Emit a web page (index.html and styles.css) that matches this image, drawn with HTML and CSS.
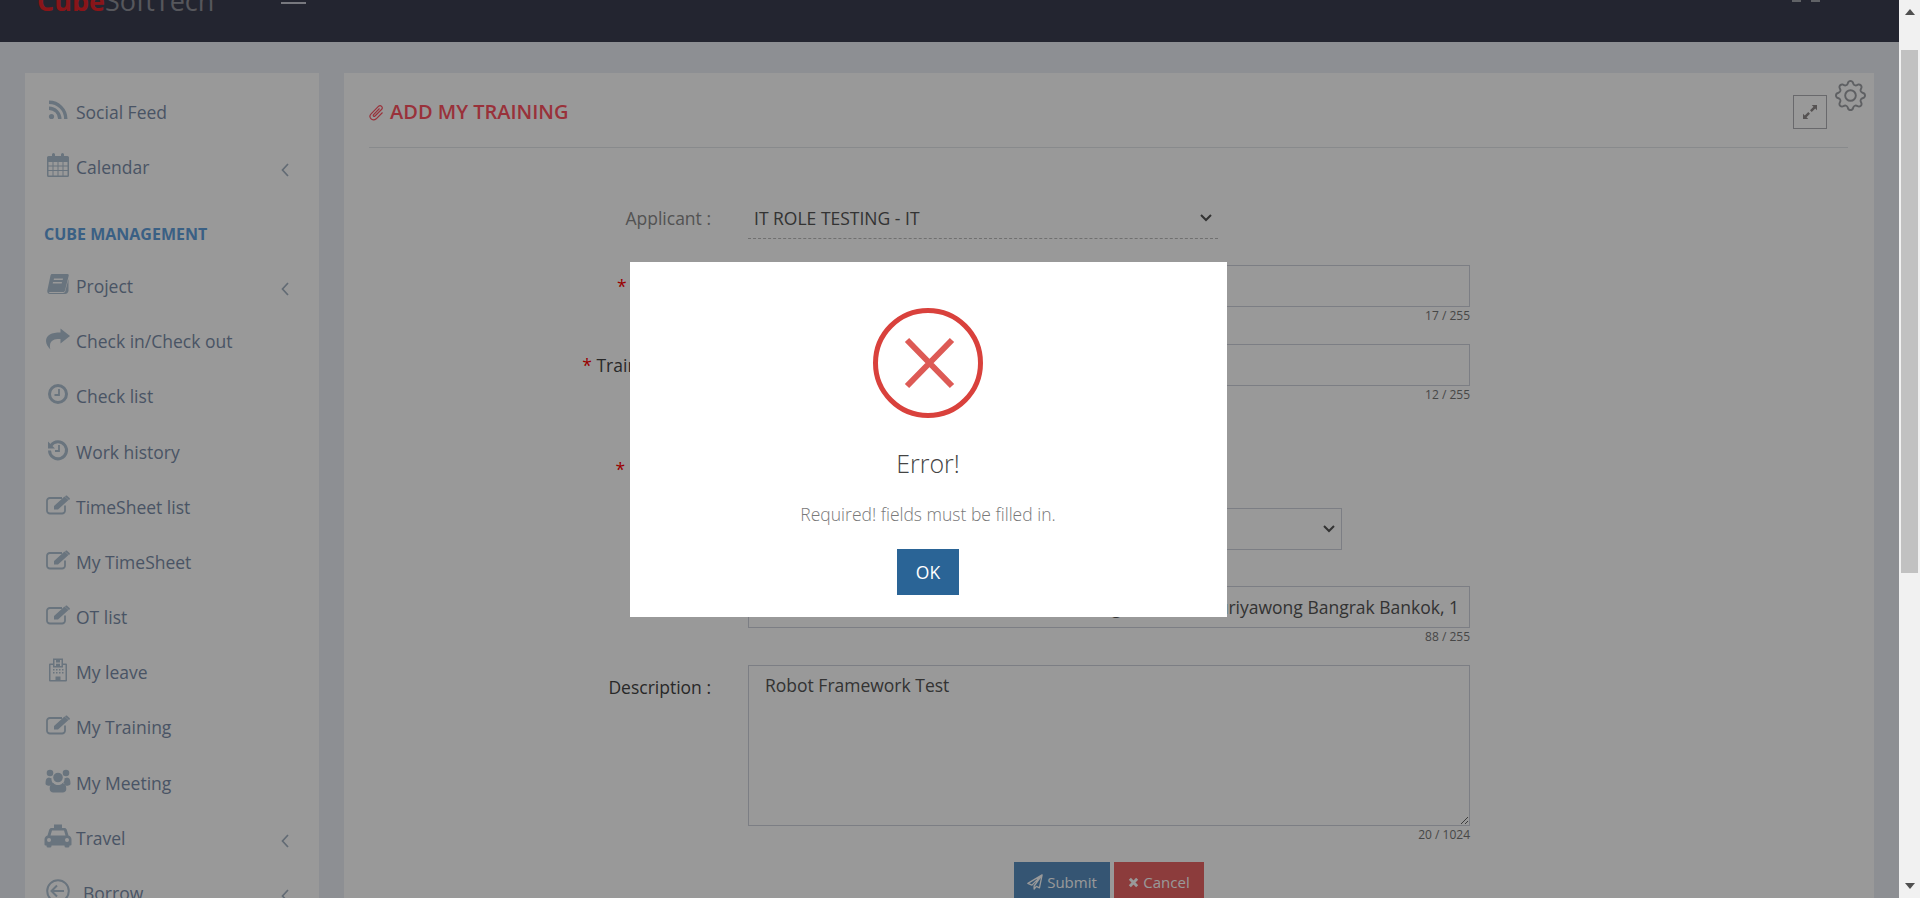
FILE: index.html
```html
<!DOCTYPE html>
<html lang="en">
<head>
<meta charset="utf-8">
<title>Add My Training</title>
<link rel="stylesheet" href="styles.css">
</head>
<body>
<svg class="defs" aria-hidden="true">
  <symbol id="i-rss" viewBox="-2 -2 24 24"><circle cx="3.500" cy="16.500" r="2.600" fill="currentColor"/><path d="M1 8.200A10.800 10.800 0 0 1 11.800 19M1 2.200A16.800 16.800 0 0 1 17.800 19" fill="none" stroke="currentColor" stroke-width="3.400"/></symbol>
  <symbol id="i-cal" viewBox="-1 0 24 24"><path fill="currentColor" fill-rule="evenodd" d="M1.500 3H5V1.500a1.500 1.500 0 0 1 3 0V3h6V1.500a1.500 1.500 0 0 1 3 0V3h3.500A1.500 1.500 0 0 1 22 4.500v18a1.500 1.500 0 0 1-1.500 1.500h-19A1.500 1.500 0 0 1 0 22.500v-18A1.500 1.500 0 0 1 1.500 3zM1.500 9v3.500h4V9zm5 0v3.500h4V9zm5 0v3.500h4V9zm5 0v3.500h4V9zM1.500 13.500V17h4v-3.500zm5 0V17h4v-3.500zm5 0V17h4v-3.500zm5 0V17h4v-3.500zM1.500 18v4.500h4V18zm5 0v4.500h4V18zm5 0v4.500h4V18zm5 0v4.500h4V18z"/></symbol>
  <symbol id="i-book" viewBox="-1 -2 24 24"><path fill="currentColor" fill-rule="evenodd" d="M5 0h15.500c1 0 1.500.8 1.200 1.800L18 16.500c-.3 1-1.200 1.500-2 1.500H3.500c-1 0-1.500.4-1.500 1h14c1 0 1.800-.3 2.200-1.400L21.500 5v12c-.5 1.800-1.800 3-3.500 3H3C1 20 0 18.500.3 16.500L3.500 1.500C3.700.6 4.200 0 5 0zm2 4.500L6.700 6h9l.3-1.500zm-1 3.500-.3 1.500h9l.3-1.500z"/></symbol>
  <symbol id="i-share" viewBox="0 -1.500 24 24"><path fill="currentColor" d="M14.500 0 24 7.500l-9.500 7.500v-4.500c-5-.2-9.800.6-10.500 6-.2 1.500-.1 3 .4 4.500C2 18.500 0 15.500 0 12.500 0 6.500 5.500 4 14.500 4z"/></symbol>
  <symbol id="i-clock" viewBox="-2 -2 24 24"><circle cx="10" cy="10" r="8.500" fill="none" stroke="currentColor" stroke-width="3"/><path d="M11 5v6H6.500" fill="none" stroke="currentColor" stroke-width="1.800"/></symbol>
  <symbol id="i-hist" viewBox="-2 -2 24 24"><path d="M3 5.500A8.500 8.500 0 1 1 1.500 10.500" fill="none" stroke="currentColor" stroke-width="3"/><path fill="currentColor" d="M0 1.500 7 8.500H0z"/><path d="M11 5v6H7" fill="none" stroke="currentColor" stroke-width="1.800"/></symbol>
  <symbol id="i-edit" viewBox="0 -2.500 24 24"><path d="M16 2.500H4A2.800 2.800 0 0 0 1 5.300v10A2.800 2.800 0 0 0 4 18h12a2.800 2.800 0 0 0 3-2.700V10" fill="none" stroke="currentColor" stroke-width="1.800"/><path fill="currentColor" d="M8 10.500 18.500 1l4 3.500L12 14H8zM19.500.4c.6-.5 1.300-.5 1.800 0l2.200 2c.6.500.6 1.200 0 1.700l-.5.400-4-3.500z"/></symbol>
  <symbol id="i-hosp" viewBox="-3 -.5 24 24"><path fill="currentColor" fill-rule="evenodd" d="M4 0h10v5h3a1 1 0 0 1 1 1v16a1 1 0 0 1-1 1H1a1 1 0 0 1-1-1V6a1 1 0 0 1 1-1h3zm1.500 1.500v6h1.500V5.200h4V7.500h1.500v-6H11V4H7V1.500zM1.500 6.500v15h5V18h5v3.500h5v-15H14v2.500H4V6.500zM4 10.500v1.500h1.500v-1.500zm3 0v1.500h1.500v-1.500zm3 0v1.500h1.500v-1.500zm3 0v1.500h1.500v-1.500zM4 13.500V15h1.500v-1.500zm3 0V15h1.500v-1.500zm3 0V15h1.500v-1.500zm3 0V15h1.500v-1.500z"/></symbol>
  <symbol id="i-users" viewBox=".5 -.5 24 24" overflow="visible"><g fill="currentColor"><circle cx="4.500" cy="3.500" r="3.300"/><circle cx="20.500" cy="3.500" r="3.300"/><circle cx="12.500" cy="8" r="4.800"/><path d="M0 14c0-4 1-6 3.500-6 .8.600 1.500.8 2.500.8-.2 2.500.6 3.700 1.500 5.200-1.500.2-2.500 1-3.200 2.200C2 16.200 0 16 0 14zM25 14c0-4-1-6-3.500-6-.8.600-1.500.8-2.500.8.200 2.500-.6 3.700-1.500 5.200 1.500.2 2.500 1 3.200 2.200C23 16.200 25 16 25 14zM8 13.500c1 1.500 2.500 2 4.500 2s3.500-.5 4.500-2c2.500 0 3.800 2.500 3.800 6 0 2.300-1.500 3.500-3.500 3.500H7.700c-2 0-3.500-1.200-3.500-3.500 0-3.500 1.300-6 3.800-6z"/></g></symbol>
  <symbol id="i-taxi" viewBox="1.500 -.5 24 24" overflow="visible"><path fill="currentColor" fill-rule="evenodd" d="M9.500 0h8v3.500H20c1 0 1.800.6 2.200 1.600L24 11c1.800.6 3 2 3 4v5a1 1 0 0 1-1 1h-1v.5a1.500 1.500 0 0 1-1.500 1.500h-2a1.500 1.500 0 0 1-1.500-1.500V21H7v.5A1.500 1.500 0 0 1 5.500 23h-2A1.500 1.500 0 0 1 2 21.500V21H1a1 1 0 0 1-1-1v-5c0-2 1.200-3.400 3-4l1.800-5.900C5.200 4.100 6 3.500 7 3.500h2.500zM7.500 6 6 11h15l-1.500-5zM4.500 13.500a2 2 0 1 0 0 4 2 2 0 0 0 0-4zm18 0a2 2 0 1 0 0 4 2 2 0 0 0 0-4z"/></symbol>
  <symbol id="i-back" viewBox="0 0 24 24"><circle cx="12" cy="12" r="10.800" fill="none" stroke="currentColor" stroke-width="2"/><path d="M11 6.500 5.500 12l5.500 5.500M6 12h12" fill="none" stroke="currentColor" stroke-width="2"/></symbol>
  <symbol id="i-chev" viewBox="0 0 8 14"><path d="M7 1 1.500 7 7 13" fill="none" stroke="currentColor" stroke-width="1.700"/></symbol>
</svg>

<div class="page">
  <header class="topbar">
    <div class="logo"><span class="logo-cube">Cube</span><span class="logo-soft">SoftTech</span></div>
    <span class="burger"></span>
    <span class="top-marks"><i></i><i></i></span>
  </header>

  <div class="content">
    <nav class="sidebar">
      <a class="item"><svg class="ic"><use href="#i-rss"/></svg><span>Social Feed</span></a>
      <a class="item"><svg class="ic"><use href="#i-cal"/></svg><span>Calendar</span><svg class="chev"><use href="#i-chev"/></svg></a>
      <div class="section">CUBE MANAGEMENT</div>
      <a class="item"><svg class="ic"><use href="#i-book"/></svg><span>Project</span><svg class="chev"><use href="#i-chev"/></svg></a>
      <a class="item"><svg class="ic"><use href="#i-share"/></svg><span>Check in/Check out</span></a>
      <a class="item"><svg class="ic"><use href="#i-clock"/></svg><span>Check list</span></a>
      <a class="item"><svg class="ic"><use href="#i-hist"/></svg><span>Work history</span></a>
      <a class="item"><svg class="ic"><use href="#i-edit"/></svg><span>TimeSheet list</span></a>
      <a class="item"><svg class="ic"><use href="#i-edit"/></svg><span>My TimeSheet</span></a>
      <a class="item"><svg class="ic"><use href="#i-edit"/></svg><span>OT list</span></a>
      <a class="item"><svg class="ic"><use href="#i-hosp"/></svg><span>My leave</span></a>
      <a class="item"><svg class="ic"><use href="#i-edit"/></svg><span>My Training</span></a>
      <a class="item"><svg class="ic"><use href="#i-users"/></svg><span>My Meeting</span></a>
      <a class="item"><svg class="ic"><use href="#i-taxi"/></svg><span>Travel</span><svg class="chev"><use href="#i-chev"/></svg></a>
      <a class="item item-borrow"><svg class="ic"><use href="#i-back"/></svg><span>Borrow</span><svg class="chev"><use href="#i-chev"/></svg></a>
    </nav>

    <main class="card">
      <svg class="gear" viewBox="0 0 16 16"><path d="M8 4.754a3.246 3.246 0 1 0 0 6.492 3.246 3.246 0 0 0 0-6.492zM5.754 8a2.246 2.246 0 1 1 4.492 0 2.246 2.246 0 0 1-4.492 0z"/><path d="M9.796 1.343c-.527-1.79-3.065-1.79-3.592 0l-.094.319a.873.873 0 0 1-1.255.52l-.292-.16c-1.64-.892-3.433.902-2.54 2.541l.159.292a.873.873 0 0 1-.52 1.255l-.319.094c-1.79.527-1.79 3.065 0 3.592l.319.094a.873.873 0 0 1 .52 1.255l-.16.292c-.892 1.64.901 3.434 2.541 2.54l.292-.159a.873.873 0 0 1 1.255.52l.094.319c.527 1.79 3.065 1.79 3.592 0l.094-.319a.873.873 0 0 1 1.255-.52l.292.16c1.64.893 3.434-.902 2.54-2.541l-.159-.292a.873.873 0 0 1 .52-1.255l.319-.094c1.79-.527 1.79-3.065 0-3.592l-.319-.094a.873.873 0 0 1-.52-1.255l.16-.292c.893-1.64-.902-3.433-2.541-2.54l-.292.159a.873.873 0 0 1-1.255-.52l-.094-.319zm-2.633.283c.246-.835 1.428-.835 1.674 0l.094.319a1.873 1.873 0 0 0 2.693 1.115l.291-.16c.764-.415 1.6.42 1.184 1.185l-.159.292a1.873 1.873 0 0 0 1.116 2.692l.318.094c.835.246.835 1.428 0 1.674l-.319.094a1.873 1.873 0 0 0-1.115 2.693l.16.291c.415.764-.42 1.6-1.185 1.184l-.291-.159a1.873 1.873 0 0 0-2.693 1.116l-.094.318c-.246.835-1.428.835-1.674 0l-.094-.319a1.873 1.873 0 0 0-2.692-1.115l-.292.16c-.764.415-1.6-.42-1.184-1.185l.159-.291A1.873 1.873 0 0 0 1.945 8.93l-.319-.094c-.835-.246-.835-1.428 0-1.674l.319-.094A1.873 1.873 0 0 0 3.06 4.377l-.16-.292c-.415-.764.42-1.6 1.185-1.184l.292.159a1.873 1.873 0 0 0 2.692-1.115l.094-.319z"/></svg>
      <div class="card-head">
        <h1 class="title">
          <svg class="clip" viewBox="0 0 16 18"><path d="M13.500 9.500 7.200 15.800c-1.700 1.500-4 1.400-5.300-.1-1.300-1.500-1.200-3.400.2-4.800l7.300-7.500c1-.9 2.300-.9 3.200 0 .9 1 .8 2.200-.1 3.100L6 13c-.5.500-1.100.5-1.500.1-.4-.4-.4-1 .1-1.500L10.500 5.500" fill="none" stroke="currentColor" stroke-width="1.200"/></svg>
          ADD MY TRAINING
        </h1>
        <button class="expand" type="button" aria-label="Expand">
          <svg viewBox="0 0 16 16"><path fill="currentColor" d="M16 0v6l-2-2-4 4-2-2 4-4-2-2zM0 16v-6l2 2 4-4 2 2-4 4 2 2z"/></svg>
        </button>
      </div>

      <form class="form">
        <div class="row row-applicant">
          <label class="lbl lbl-muted">Applicant :</label>
          <select class="sel-plain"><option>IT ROLE TESTING - IT</option></select>
        </div>
        <div class="row row-1">
          <label class="lbl"><em>*</em> Program :</label>
          <div class="field"><input class="inp" value="Robot Framework 1"><small>17 / 255</small></div>
        </div>
        <div class="row row-2">
          <label class="lbl"><em>*</em> Training Title :</label>
          <div class="field"><input class="inp" value="Robot Test 1"><small>12 / 255</small></div>
        </div>
        <div class="row row-3">
          <label class="lbl"><em>*</em> Duration :</label>
          <div class="field field-date"><input class="inp" value="01/01/2021 - 01/01/2021"></div>
        </div>
        <div class="row row-4">
          <label class="lbl">Type :</label>
          <div class="field field-type"><select class="sel"><option>Internal</option></select></div>
        </div>
        <div class="row row-5">
          <label class="lbl">Location :</label>
          <div class="field"><input class="inp inp-addr" value="CubeSoft Tech Co., Ltd. No. 1 Silom Training Street 12, Suriyawong Bangrak Bankok, 1"><small>88 / 255</small></div>
        </div>
        <div class="row row-6">
          <label class="lbl">Description :</label>
          <div class="field"><textarea class="area">Robot Framework Test</textarea><small>20 / 1024</small></div>
        </div>
        <div class="actions">
          <button class="btn btn-submit" type="button">
            <svg viewBox="0 0 18 18"><path d="M17 1 1 10.500l4.500 2L17 1 8 13.500v3.500l2.500-3 3.500 1.500z" fill="none" stroke="currentColor" stroke-width="1.500" stroke-linejoin="round"/></svg>
            Submit
          </button>
          <button class="btn btn-cancel" type="button">
            <svg viewBox="0 0 12 12"><path d="M2 2l8 8M10 2l-8 8" fill="none" stroke="currentColor" stroke-width="3.200"/></svg>
            Cancel
          </button>
        </div>
      </form>
    </main>
  </div>

  <div class="overlay"></div>
  <div class="modal" role="dialog">
    <svg class="err" viewBox="0 0 110 110"><circle cx="55" cy="55" r="52.500" fill="none" stroke="#d9413c" stroke-width="5"/><path d="M34 32 79 78M79 32 34 78" fill="none" stroke="#dd5a55" stroke-width="6"/></svg>
    <h2 class="modal-title">Error!</h2>
    <p class="modal-text">Required! fields must be filled in.</p>
    <button class="ok" type="button">OK</button>
  </div>
</div>

<div class="scrollbar">
  <span class="arrow arrow-up"></span>
  <div class="track"><div class="thumb"></div></div>
  <span class="arrow arrow-down"></span>
</div>
</body>
</html>
```
FILE: styles.css
```css
* { box-sizing: border-box; }
html, body { height: 100%; }
body {
  margin: 0;
  display: flex;
  overflow: hidden;
  font-family: "Open Sans", sans-serif;
  font-size: 17.5px;
  color: #555;
  background: #ebeef5;
}
.defs { display: none; }

.page { position: relative; flex: 1; min-width: 0; overflow: hidden; display: flex; flex-direction: column; }

/* header */
.topbar {
  position: relative;
  flex: 0 0 42px;
  height: 42px;
  background: #3b3f50;
  display: flex;
  align-items: flex-end;
  padding: 0 0 34px 37px;
  overflow: hidden;
}
.logo { font-size: 27px; line-height: 1; margin-bottom: -6px; white-space: nowrap; }
.logo-cube { color: #e5232a; font-weight: 700; }
.logo-soft { color: #8f919a; font-weight: 400; }
.burger { position: absolute; left: 281px; top: 2px; width: 25px; height: 2px; background: #c6c9d2; }
.top-marks { position: absolute; left: 1792px; top: 0; display: flex; gap: 10px; }
.top-marks i { display: block; width: 9px; height: 2px; background: #a0a3ab; }

/* layout */
.content { display: flex; gap: 25px; padding: 31px 25px 0; min-height: 0; flex: 1; }

/* sidebar */
.sidebar { flex: 0 0 294px; background: #fff; padding: 11.500px 0 0 21px; color: #77889f; }
.item { display: flex; align-items: center; height: 55.200px; color: #7b8da8; position: relative; }
.ic { width: 24px; height: 24px; margin-right: 6px; flex: none; color: #b0c2d2; margin-top: -4px; overflow: visible; }
.chev { width: 8px; height: 14px; position: absolute; left: 235px; top: 23.500px; color: #a4b2c2; }
.item-borrow span { margin-left: 7px; }
.section { height: 63.500px; padding-top: 16px; margin-left: -2px; line-height: 46px; font-size: 16px; font-weight: 700; color: #62a0dc; white-space: nowrap; }

/* main card */
.card { position: relative; flex: 0 0 1530px; background: #fff; padding: 0 26px 0 25px; }
.card-head { height: 75px; border-bottom: 1px solid #e3e6ea; display: flex; align-items: flex-start; justify-content: space-between; padding-right: 21px; }
.title { margin: 0; display: flex; align-items: center; gap: 5px; height: 77px; font-size: 20px; font-weight: 600; color: #ff5362; }
.clip { width: 16px; height: 18px; }
.expand { margin-top: 22px; width: 34px; height: 34px; padding: 0; background: none; border: 1px solid #b0b0b4; display: flex; align-items: center; justify-content: center; color: #8f8a8a; }
.expand svg { width: 14px; height: 14px; }
.gear { position: absolute; left: 1491px; top: 7px; width: 31px; height: 31px; fill: #9ea1a6; }

/* form */
.form { display: flex; flex-direction: column; padding-top: 49px; }
.row { display: grid; grid-template-columns: 342px 722px; column-gap: 37px; }
.row-2, .row-5, .row-6 { margin-top: 19px; }
.row-1 { margin-top: 26px; }
.row-3 { margin-top: 44px; }
.row-4 { margin-top: 18px; }
.row-5 { margin-top: 36px; }
.lbl { text-align: right; line-height: 42px; color: #444; white-space: nowrap; }
.lbl-muted { color: #8a8a8a; }
.lbl em { font-style: normal; color: #f00; }
.row-6 .lbl { line-height: 44px; }
.sel-plain, .sel {
  appearance: none;
  background: transparent url("data:image/svg+xml,%3Csvg xmlns='http://www.w3.org/2000/svg' viewBox='0 0 12 8'%3E%3Cpath d='M1 1l5 5 5-5' fill='none' stroke='%23555' stroke-width='2'/%3E%3C/svg%3E") no-repeat right 6px center / 12px 8px;
}
.sel-plain {
  width: 470px; height: 42px; padding: 0 6px; color: #555;
  border: 0; border-bottom: 1px dashed #bbb; font: 17.5px "Open Sans", sans-serif; outline: 0;
}
.field { display: flex; flex-direction: column; }
.field small { height: 18px; line-height: 18px; text-align: right; font-size: 12px; color: #777; }
.field-date { width: 400px; }
.field-type { width: 594px; }
.inp, .sel, .area {
  width: 100%; border: 1px solid #cfd3dc; color: #555;
  font: 17.5px "Open Sans", sans-serif; outline: 0; display: block;
}
.inp, .area { background: transparent; }
.inp, .sel { height: 42px; padding: 0 16px; }
.inp-addr { padding-right: 6px; }
.area { height: 161px; padding: 7px 16px; line-height: 24px; }

.actions { display: flex; justify-content: flex-start; gap: 4px; margin-top: 18px; padding-left: 645px; }
.btn { height: 40px; border: 0; color: #fff; font: 15px "Open Sans", sans-serif; display: flex; align-items: center; justify-content: center; gap: 4px; padding: 0; opacity: .92; }
.btn svg { width: 16px; height: 16px; }
.btn-submit { width: 96px; background: #4b85bb; }
.btn-cancel { width: 90px; background: #e85757; }
.btn-cancel svg { width: 11px; height: 11px; }

/* overlay + dialog */
.overlay { position: absolute; inset: 0; background: rgba(0, 0, 0, .4); }
.modal {
  position: absolute; left: 630px; top: 262px; width: 597px; height: 355px;
  background: #fff; display: flex; flex-direction: column; align-items: center; padding: 46px 1px 0 0;
}
.err { width: 110px; height: 110px; flex: none; }
.modal-title { margin: 26px 0 0; font-size: 25px; font-weight: 300; line-height: 38px; color: #444; }
.modal-text { margin: 20px 0 0; font-size: 17.5px; font-weight: 300; line-height: 24px; color: #797979; }
.ok { margin-top: 23px; width: 62px; height: 46px; border: 0; background: #2a6496; color: #fff; font: 17.5px "Open Sans", sans-serif; padding: 0; }

/* scrollbar */
.scrollbar { flex: 0 0 21px; background: #f1f1f1; display: flex; flex-direction: column; align-items: center; }
.arrow { flex: none; width: 0; height: 0; border-left: 5px solid transparent; border-right: 5px solid transparent; }
.arrow-up { margin-top: 9px; border-bottom: 6px solid #505050; }
.arrow-down { margin-bottom: 9px; border-top: 6px solid #505050; }
.track { flex: 1; width: 100%; padding: 35px 2px 0; }
.thumb { height: 523px; background: #c1c1c1; }
```
